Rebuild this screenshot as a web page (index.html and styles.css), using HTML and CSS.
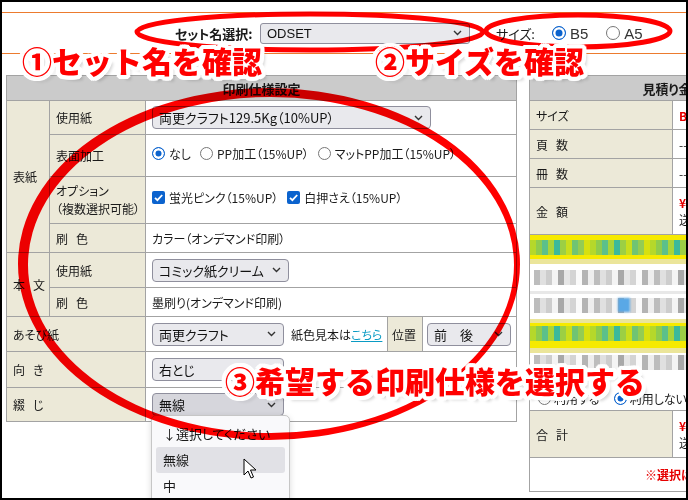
FILE: index.html
```html
<!DOCTYPE html>
<html lang="ja">
<head>
<meta charset="utf-8">
<link rel="stylesheet" href="styles.css">
</head>
<body>
<div class="frame">
  <div class="topbar">
    <span class="set-lbl">セット名選択:</span>
    <div class="sel sel-set"><span class="latin">ODSET</span><svg class="chev" width="9" height="6" viewBox="0 0 9 6"><path d="M1 1l3.5 3.5L8 1" fill="none" stroke="#333" stroke-width="1.4"/></svg></div>
    <span class="size-lbl">サイズ:</span>
    <span class="radio on big"></span><span class="rtxt">B5</span>
    <span class="radio big second"></span><span class="rtxt">A5</span>
  </div>

  <div class="main">
    <table class="spec">
      <colgroup><col class="c1"><col class="c2"><col class="c3"><col class="c4"><col class="c5"></colgroup>
      <tr class="hd"><th colspan="5">印刷仕様設定</th></tr>
      <tr class="r34">
        <td rowspan="4" class="lb g1">表紙</td>
        <td class="lb">使用紙</td>
        <td colspan="3"><div class="sel w-paper"><span>両更クラフト129.5Kg（10%UP）</span><svg class="chev" width="9" height="6" viewBox="0 0 9 6"><path d="M1 1l3.5 3.5L8 1" fill="none" stroke="#333" stroke-width="1.4"/></svg></div></td>
      </tr>
      <tr class="r42">
        <td class="lb">表面加工</td>
        <td colspan="3" class="pad-up">
          <div class="opts">
            <span class="opt"><span class="radio on"></span>なし</span>
            <span class="opt"><span class="radio"></span>PP加工（15%UP）</span>
            <span class="opt"><span class="radio"></span>マットPP加工（15%UP）</span>
          </div>
        </td>
      </tr>
      <tr class="r47">
        <td class="lb two">オプション<br>（複数選択可能）</td>
        <td colspan="3" class="pad-up">
          <div class="opts">
            <span class="opt"><span class="check"><svg width="13" height="13" viewBox="0 0 13 13"><path d="M3 6.8l2.4 2.4L10.2 4" fill="none" stroke="#fff" stroke-width="1.8"/></svg></span>蛍光ピンク（15%UP）</span>
            <span class="opt"><span class="check"><svg width="13" height="13" viewBox="0 0 13 13"><path d="M3 6.8l2.4 2.4L10.2 4" fill="none" stroke="#fff" stroke-width="1.8"/></svg></span>白押さえ（15%UP）</span>
          </div>
        </td>
      </tr>
      <tr class="r29">
        <td class="lb"><span class="sp">刷</span>色</td>
        <td colspan="3">カラー（オンデマンド印刷）</td>
      </tr>
      <tr class="r35">
        <td rowspan="2" class="lb g1"><span class="sp">本</span>文</td>
        <td class="lb">使用紙</td>
        <td colspan="3"><div class="sel w-comic"><span>コミック紙クリーム</span><svg class="chev" width="9" height="6" viewBox="0 0 9 6"><path d="M1 1l3.5 3.5L8 1" fill="none" stroke="#333" stroke-width="1.4"/></svg></div></td>
      </tr>
      <tr class="r29">
        <td class="lb"><span class="sp">刷</span>色</td>
        <td colspan="3">墨刷り(オンデマンド印刷)</td>
      </tr>
      <tr class="r35">
        <td colspan="2" class="lb">あそび紙</td>
        <td>
          <div class="inline">
            <div class="sel w-short"><span>両更クラフト</span><svg class="chev" width="9" height="6" viewBox="0 0 9 6"><path d="M1 1l3.5 3.5L8 1" fill="none" stroke="#333" stroke-width="1.4"/></svg></div>
            <span class="sample">紙色見本は<a class="link">こちら</a></span>
          </div>
        </td>
        <td class="lb pos">位置</td>
        <td class="tight"><div class="sel w-pos"><span>前　後</span><svg class="chev" width="9" height="6" viewBox="0 0 9 6"><path d="M1 1l3.5 3.5L8 1" fill="none" stroke="#333" stroke-width="1.4"/></svg></div></td>
      </tr>
      <tr class="r36">
        <td colspan="2" class="lb"><span class="sp">向</span>き</td>
        <td colspan="3"><div class="sel w-short"><span>右とじ</span><svg class="chev" width="9" height="6" viewBox="0 0 9 6"><path d="M1 1l3.5 3.5L8 1" fill="none" stroke="#333" stroke-width="1.4"/></svg></div></td>
      </tr>
      <tr class="r34">
        <td colspan="2" class="lb"><span class="sp">綴</span>じ</td>
        <td colspan="3"><div class="sel w-short open"><span>無線</span><svg class="chev" width="9" height="6" viewBox="0 0 9 6"><path d="M1 1l3.5 3.5L8 1" fill="none" stroke="#333" stroke-width="1.4"/></svg></div></td>
      </tr>
    </table>

    <table class="est">
      <colgroup><col class="e1"><col class="e2"></colgroup>
      <tr class="hd"><th colspan="2">見積り金額</th></tr>
      <tr class="r29"><td class="lb">サイズ</td><td class="red">B5</td></tr>
      <tr class="r29"><td class="lb"><span class="sp">頁</span>数</td><td>--</td></tr>
      <tr class="r29"><td class="lb"><span class="sp">冊</span>数</td><td>--</td></tr>
      <tr class="r47"><td class="lb"><span class="sp">金</span>額</td><td><span class="red">¥0</span><br>送料込</td></tr>
      <tr>
        <td colspan="2" class="blurcell">
          <div class="blur">
            <div class="band"><div class="mosaic green"></div></div>
            <div class="grow"><div class="mosaic gray"></div></div>
            <div class="rule"></div>
            <div class="grow g2"><div class="mosaic gray"></div><span class="blue-blob"></span></div>
            <div class="band b2"><div class="mosaic green"></div></div>
            <div class="grow g3"><div class="mosaic gray"></div></div>
            <div class="use-row">
              <span class="radio"></span><span class="utxt">利用する</span>
              <span class="radio on"></span><span class="utxt">利用しない</span>
            </div>
          </div>
        </td>
      </tr>
      <tr class="r47"><td class="lb"><span class="sp">合</span>計</td><td><span class="red">¥0</span><br>送料込</td></tr>
      <tr class="r34"><td colspan="2" class="warn">※選択は必須です</td></tr>
    </table>
  </div>

  <div class="layer">
    <div class="popup">
      <div class="item">↓選択してください</div>
      <div class="item hl">無線</div>
      <div class="item">中</div>
    </div>
    <svg class="marks" width="688" height="500" viewBox="0 0 688 500">
      <ellipse cx="310" cy="32" rx="173" ry="18" fill="none" stroke="#ff0000" stroke-width="5"/>
      <ellipse cx="578" cy="31" rx="92" ry="16" fill="none" stroke="#ff0000" stroke-width="5"/>
      <path fill="#ff0000" fill-rule="evenodd" d="M18,264 a251,176 0 1,0 502,0 a251,176 0 1,0 -502,0 Z M28,265 a243,168 0 1,0 486,0 a243,168 0 1,0 -486,0 Z"/>
    </svg>
    <div class="anno a1">①セット名を確認</div>
    <div class="anno a2">②サイズを確認</div>
    <div class="anno a3">③希望する印刷仕様を選択する</div>
    <svg class="cursor" width="14" height="22" viewBox="0 0 14 22">
      <path d="M1 1v16l4-4 3 7 2.5-1-3-7H13z" fill="#fff" stroke="#000" stroke-width="1" stroke-linejoin="round"/>
    </svg>
  </div>
</div>
</body>
</html>
```

FILE: styles.css
```css
* { box-sizing: border-box; }
body {
  margin: 0;
  font-family: "Noto Sans CJK JP", "Noto Sans", sans-serif;
  font-size: 12px;
  color: #1a1a1a;
  font-feature-settings: "palt" 1;
}
.frame {
  width: 688px;
  height: 500px;
  border: 2px solid #000;
  position: relative;
  overflow: hidden;
  background: #fff;
}
.topbar {
  margin-top: 10px;
  height: 42px;
  border-top: 1px solid #ec7b2e;
  border-bottom: 1px solid #ec7b2e;
  display: flex;
  align-items: center;
  padding-left: 173px;
}
.set-lbl { font-size: 13px; font-weight: 700; width: 85px; flex: none; white-space: nowrap; }
.sel {
  display: flex;
  align-items: center;
  justify-content: space-between;
  height: 23px;
  border: 1px solid #8f8f9d;
  border-radius: 4px;
  background: #e9e9ed;
  padding: 0 7px 0 6px;
  font-size: 13px;
  color: #111;
  white-space: nowrap;
  flex: none;
}
.chev { flex: none; }
.latin { font-family: "Liberation Sans", Arial, sans-serif; font-size: 13px; }
.sel-set { width: 210px; height: 21px; border-radius: 3px; margin-right: 26px; }
.size-lbl { font-size: 13px; width: 56px; flex: none; }
.radio {
  display: inline-block;
  width: 13px;
  height: 13px;
  border-radius: 50%;
  border: 1.5px solid #777;
  background: #fff;
  flex: none;
}
.radio.on {
  border: 1.5px solid #0b63ce;
  background: #0b63ce;
  box-shadow: inset 0 0 0 2.5px #fff;
}
.radio.big { width: 14px; height: 14px; }
.radio.second { margin-left: 18px; }
.rtxt {
  font-family: "Liberation Sans", Arial, sans-serif;
  font-size: 15px;
  color: #333;
  margin-left: 4px;
}

.main {
  margin-top: 21px;
  display: flex;
  align-items: flex-start;
  padding-left: 4px;
  gap: 12px;
}
table { border-collapse: collapse; table-layout: fixed; }
th, td { border: 1px solid #a3a3a3; padding: 0 6px; vertical-align: middle; text-align: left; font-weight: 400; white-space: nowrap; }
.hd th {
  background: #cbcbcb;
  text-align: center;
  font-weight: 700;
  font-size: 13px;
  height: 25px;
}
.lb { background: #ece9d8; }
.g1 { padding: 0 4px 0 6px; }
.two { line-height: 18px; }
.spec { width: 510px; flex: none; }
.c1 { width: 43px; }
.c2 { width: 96px; }
.c3 { width: 242px; }
.c4 { width: 35px; }
.c5 { width: 94px; }
.r34 { height: 34px; }
.r42 { height: 42px; }
.r47 { height: 47px; }
.r29 { height: 29px; }
.r35 { height: 35px; }
.r36 { height: 36px; }
.sp { margin-right: 8px; }
.pad-up { padding-bottom: 5px; }
.opts { display: flex; align-items: center; gap: 9px; white-space: nowrap; }
.opt { display: flex; align-items: center; gap: 4px; }
.check {
  display: inline-flex;
  width: 13px;
  height: 13px;
  border-radius: 2px;
  background: #0b63ce;
}
.w-paper { width: 279px; }
.w-comic { width: 137px; }
.w-short { width: 132px; }
.w-pos { width: 84px; }
.open { background: #d6d6dc; }
.inline { display: flex; align-items: center; gap: 7px; white-space: nowrap; }
.link { color: #0a9bc4; text-decoration: underline; }
.pos { padding: 0 4px; }
.tight { padding: 0 4px; }

.est { width: 288px; flex: none; }
.e1 { width: 143px; }
.e2 { width: 145px; }
.red { color: #e60000; font-weight: 700; }
.blurcell { padding: 0; height: 175px; vertical-align: top; }
.blur { display: flex; flex-direction: column; }
.band {
  height: 29px;
  background: #f6ea00;
  border-bottom: 5px solid #ebe59a;
  padding-top: 5px;
}
.band.b2 { height: 34px; border-top: 4px solid #ebe59a; padding-top: 3px; }
.mosaic { height: 15px; filter: blur(0.6px); }
.green {
  background: repeating-linear-gradient(90deg,
    #b5d82a 0 6px, #8fcc4c 6px 12px, #5cc08a 12px 18px, #a8d43a 18px 24px,
    #3bb99c 24px 30px, #9ccf44 30px 36px, #c8de1e 36px 42px, #70c474 42px 48px,
    #94cc52 48px 54px, #d6e010 54px 60px);
}
.grow { height: 27px; padding-top: 6px; position: relative; }
.grow.g2 { height: 25px; padding-top: 4px; }
.grow.g3 { height: 20px; padding-top: 2px; }
.gray {
  background: repeating-linear-gradient(90deg,
    #bdbdbd 0 6px, #e0e0e0 6px 12px, #cdcdcd 12px 18px, #f4f4f4 18px 24px,
    #a8a8a8 24px 30px, #e6e6e6 30px 36px, #d4d4d4 36px 42px, #fafafa 42px 48px,
    #b4b4b4 48px 54px, #eeeeee 54px 60px);
  margin: 0 4px;
}
.rule { height: 3px; background: #e8e8e8; }
.blue-blob {
  position: absolute;
  left: 88px;
  top: 4px;
  width: 12px;
  height: 14px;
  background: #5aa8e6;
  filter: blur(1px);
}
.use-row {
  height: 37px;
  display: flex;
  align-items: center;
  padding: 14px 0 0 8px;
  white-space: nowrap;
}
.utxt { margin-left: 3px; margin-right: 14px; }
.warn {
  color: #e60000;
  font-weight: 700;
  padding-left: 115px;
  white-space: nowrap;
}

.layer {
  position: absolute;
  top: -2px;
  left: -2px;
  width: 688px;
  height: 500px;
  pointer-events: none;
}
.popup {
  position: absolute;
  left: 151px;
  top: 415px;
  width: 139px;
  height: 100px;
  border: 1px solid #c6c6c6;
  border-radius: 5px;
  background: #f9f9fb;
  box-shadow: 0 2px 6px rgba(0,0,0,.15);
  padding: 5px 4px;
  font-size: 13px;
}
.item { height: 26px; line-height: 26px; padding-left: 7px; border-radius: 3px; }
.item.hl { background: #e1e1e6; }
.marks { position: absolute; left: 0; top: 0; mix-blend-mode: multiply; }
.anno {
  position: absolute;
  font-family: "Noto Sans CJK JP", sans-serif;
  font-feature-settings: normal;
  font-weight: 900;
  font-size: 30px;
  line-height: 34px;
  color: #ff0000;
  white-space: nowrap;
  text-shadow:
    4px 0 0 #fff, -4px 0 0 #fff, 0 4px 0 #fff, 0 -4px 0 #fff,
    3px 3px 0 #fff, -3px 3px 0 #fff, 3px -3px 0 #fff, -3px -3px 0 #fff,
    4px 2px 0 #fff, -4px 2px 0 #fff, 4px -2px 0 #fff, -4px -2px 0 #fff,
    2px 4px 0 #fff, -2px 4px 0 #fff, 2px -4px 0 #fff, -2px -4px 0 #fff,
    5px 5px 3px rgba(0,0,0,.15);
}
.a1 { left: 22px; top: 43px; }
.a2 { left: 375px; top: 43px; }
.a3 { left: 225px; top: 363px; }
.cursor { position: absolute; left: 243px; top: 458px; }
```
